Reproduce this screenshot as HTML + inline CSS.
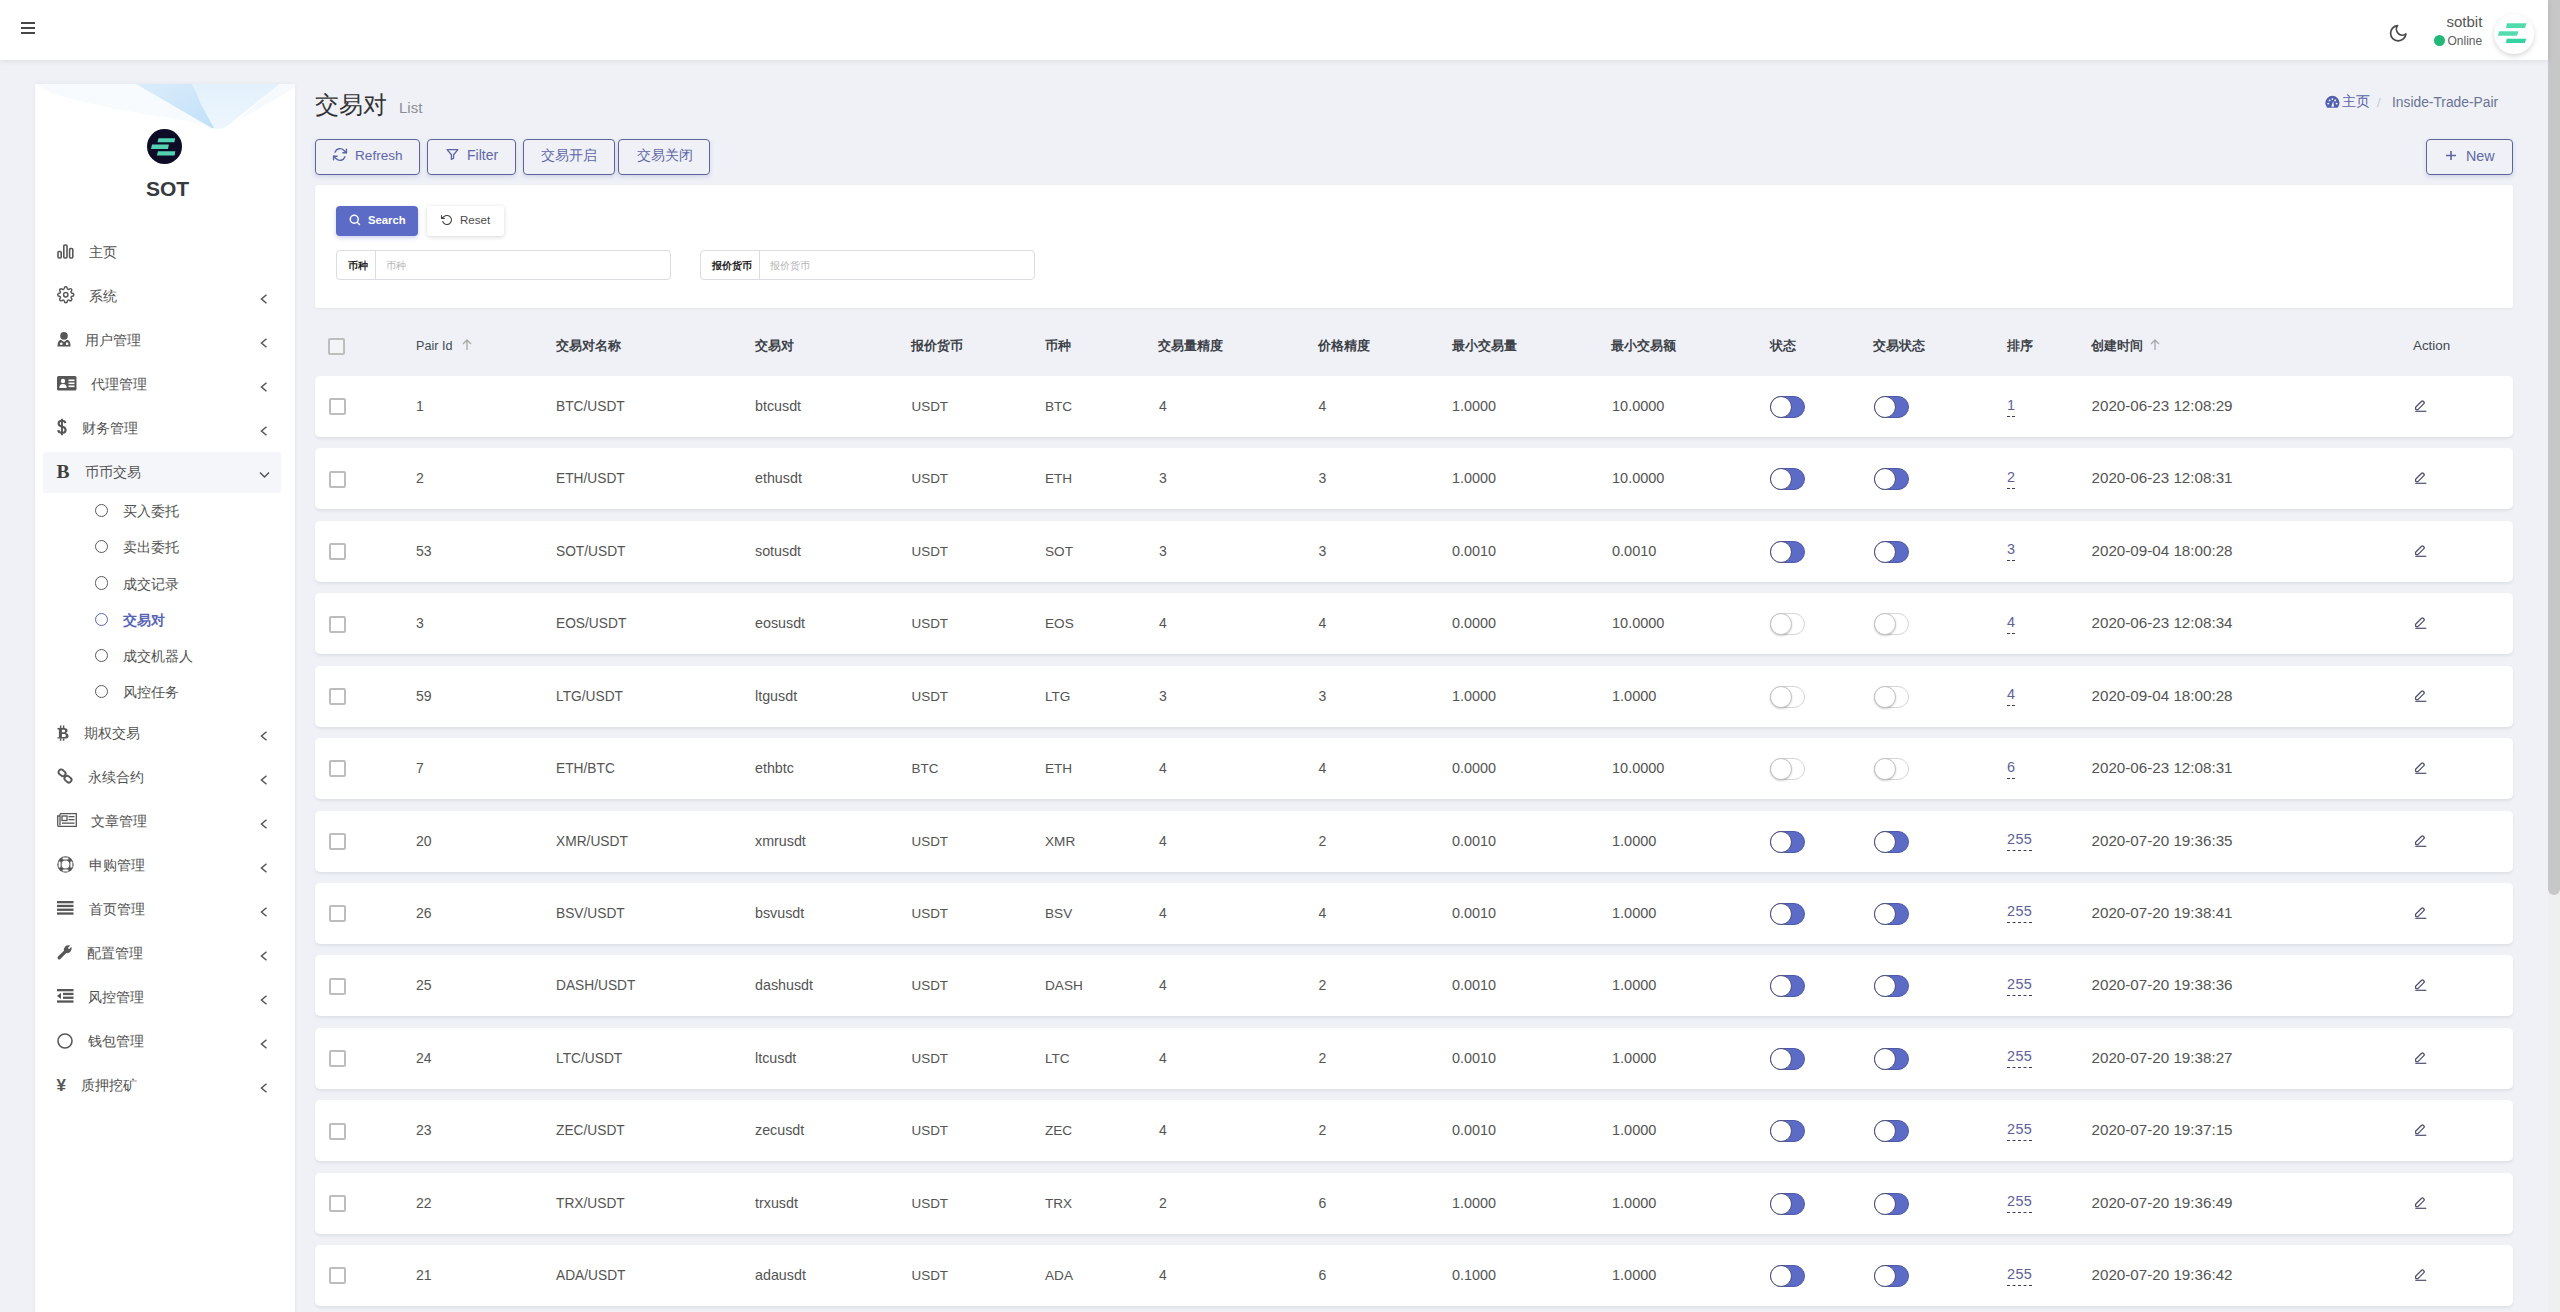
<!DOCTYPE html>
<html><head><meta charset="utf-8"><title>交易对</title>
<style>
*{box-sizing:border-box}
html,body{margin:0;padding:0}
body{width:2560px;height:1312px;overflow:hidden;position:relative;background:#eff1f7;
 font-family:"Liberation Sans",sans-serif;color:#4f4f4f}
.t{position:absolute;white-space:nowrap}
.a{position:absolute}
svg{position:absolute;overflow:visible}
.card{position:absolute;background:#fff;border-radius:5px;box-shadow:0 2px 3px rgba(20,20,30,.065)}
.btn{position:absolute;border:1px solid #5e6499;border-radius:4px;box-shadow:0 2px 4px rgba(70,80,160,.18)}
.cb{position:absolute;width:17px;height:17px;border:2px solid #bdbdbd;border-radius:2px;background:#fff}
.sw{position:absolute;width:35px;height:22px;border-radius:11px}
.sw.on{background:#5c6bc6;border:1px solid #4f5aa8}
.sw.off{background:#fff;border:1px solid #d6d6d6}
.sw i{position:absolute;left:-1px;top:-1px;width:22px;height:22px;border-radius:50%;background:#fff}
.sw.on i{border:1.5px solid #4b4f7a}
.sw.off i{border:1px solid #c4c4c4;box-shadow:0 1px 2px rgba(0,0,0,.2)}
.srt{position:absolute;border-bottom:1px dashed #3c3f63;color:#5d6199;font-size:14.4px;letter-spacing:0.4px;line-height:17px;height:20px;white-space:nowrap}
</style></head><body>

<div class="a" style="left:0;top:0;width:2548px;height:60px;background:#fff;box-shadow:0 1px 6px rgba(0,0,0,.09);z-index:2">
<div class="a" style="left:21px;top:22px;width:14px;height:2px;background:#474747"></div>
<div class="a" style="left:21px;top:27px;width:14px;height:2px;background:#474747"></div>
<div class="a" style="left:21px;top:32px;width:14px;height:2px;background:#474747"></div>
<svg style="left:2387.5px;top:22.5px" width="20.5" height="20.5" viewBox="0 0 24 24"><path d="M21 12.79A9 9 0 1 1 11.21 3 7 7 0 0 0 21 12.79z" fill="none" stroke="#4a4a4a" stroke-width="2" stroke-linejoin="round"/></svg>
<div class="t" style="left:2446.5px;top:10.54px;font-size:15px;line-height:21.0px;color:#555;font-weight:normal;">sotbit</div>
<div class="a" style="left:2434px;top:35px;width:11px;height:11px;border-radius:50%;background:#21b978"></div>
<div class="t" style="left:2447.5px;top:32.63px;font-size:12px;line-height:16.8px;color:#606060;font-weight:normal;">Online</div>
<div class="a" style="left:2494px;top:14px;width:40px;height:40px;border-radius:50%;background:#fff;box-shadow:0 2px 5px rgba(0,0,0,.16)"></div>
<svg style="left:2494px;top:13.5px" width="40" height="40" viewBox="0 0 40 40"><polygon points="13,9.2 32.5,9.2 31,14 12,14" fill="#4fdcaa"/><polygon points="5,17.2 24.5,17.2 23,21.8 4,21.8" fill="#55dcae"/><polygon points="12.8,24.7 32.3,24.7 30.8,28.9 11.8,28.9" fill="#33d3a3"/></svg>
</div>
<div class="a" style="left:2548px;top:0;width:12px;height:1312px;background:#eeefef"></div>
<div class="a" style="left:2548px;top:0;width:12px;height:895px;background:#c7c7c7;border-radius:0 0 6px 6px"></div>
<div class="a" style="left:35px;top:84px;width:260px;height:1240px;background:#fff;box-shadow:0 0 4px rgba(0,0,0,.05);overflow:hidden">
<svg style="left:0;top:0" width="260" height="60" viewBox="0 0 260 60"><defs><linearGradient id="g1" x1="0" y1="0" x2="1" y2="1"><stop offset="0" stop-color="#dcedfb"/><stop offset="1" stop-color="#c0e0f8"/></linearGradient><linearGradient id="g2" x1="0" y1="0" x2="0" y2="1"><stop offset="0" stop-color="#e2f1fc"/><stop offset="1" stop-color="#eef6fd"/></linearGradient></defs><path d="M0 0 H101 L178 43 Q150 36 110 30 Q60 22 18 10Z" fill="#f7fbfd"/><path d="M101 0 L157 0 Q162 8 166 20 L180 44 Q177 45 175 43 Z" fill="url(#g1)"/><path d="M157 0 L245 0 L192 42 Q185 47 179 44 L166 20 Q162 8 157 0Z" fill="url(#g2)"/><path d="M245 0 L260 0 L260 4 L200 38Z" fill="#f6fafd"/></svg>
</div>
<svg style="left:147px;top:129px" width="35" height="35" viewBox="0 0 35 35"><circle cx="17.5" cy="17.5" r="17.5" fill="#0d0b26"/><polygon points="11.5,9.2 28.2,9.2 27.4,13.2 10.5,13.2" fill="#52d2b0"/><polygon points="5,15.5 21.9,15.5 21,19.9 4,19.9" fill="#52d2b0"/><polygon points="10.9,22.2 28.4,22.2 27.6,26.5 9.9,26.5" fill="#52d2b0"/></svg>
<div class="t" style="left:146px;top:174.36px;font-size:21px;line-height:29.4px;color:#363a3f;font-weight:bold;">SOT</div>
<div class="a" style="left:43px;top:452px;width:238px;height:41px;background:#f5f6f9;border-radius:3px"></div>
<svg style="left:57px;top:243.5px" width="17" height="15" viewBox="0 0 17 15"><rect x="1" y="7.5" width="3.2" height="6.5" rx="1" fill="none" stroke="#575757" stroke-width="1.6"/><rect x="6.8" y="1" width="3.2" height="13" rx="1" fill="none" stroke="#575757" stroke-width="1.6"/><rect x="12.6" y="4.5" width="3.2" height="9.5" rx="1" fill="none" stroke="#575757" stroke-width="1.6"/></svg>
<div class="t" style="left:89px;top:242.57px;font-size:14px;line-height:19.6px;color:#525252;font-weight:normal;">主页</div>
<svg style="left:56.5px;top:286.3px" width="17.5" height="17.5" viewBox="0 0 24 24"><circle cx="12" cy="12" r="3" fill="none" stroke="#575757" stroke-width="2"/><path fill="none" stroke="#575757" stroke-width="2" d="M19.4 15a1.65 1.65 0 0 0 .33 1.82l.06.06a2 2 0 0 1 0 2.83 2 2 0 0 1-2.83 0l-.06-.06a1.65 1.65 0 0 0-1.82-.33 1.65 1.65 0 0 0-1 1.51V21a2 2 0 0 1-2 2 2 2 0 0 1-2-2v-.09A1.65 1.65 0 0 0 9 19.4a1.65 1.65 0 0 0-1.82.33l-.06.06a2 2 0 0 1-2.83 0 2 2 0 0 1 0-2.830l.06-.06a1.65 1.65 0 0 0 .33-1.82 1.65 1.65 0 0 0-1.51-1H3a2 2 0 0 1-2-2 2 2 0 0 1 2-2h.09A1.65 1.65 0 0 0 4.6 9a1.65 1.65 0 0 0-.33-1.82l-.06-.06a2 2 0 0 1 0-2.83 2 2 0 0 1 2.83 0l.06.06a1.65 1.65 0 0 0 1.820.33H9a1.65 1.65 0 0 0 1-1.51V3a2 2 0 0 1 2-2 2 2 0 0 1 2 2v.09a1.65 1.65 0 0 0 1 1.51 1.65 1.65 0 0 0 1.82-.33l.06-.06a2 2 0 0 1 2.83 0 2 2 0 0 1 0 2.83l-.06.06a1.65 1.65 0 0 0-.33 1.82V9a1.65 1.65 0 0 0 1.51 1H21a2 2 0 0 1 2 2 2 2 0 0 1-2 2h-.09a1.65 1.65 0 0 0-1.51 1z"/></svg>
<div class="t" style="left:89px;top:286.57px;font-size:14px;line-height:19.6px;color:#525252;font-weight:normal;">系统</div>
<svg style="left:260px;top:293.5px" width="8" height="10" viewBox="0 0 8 10"><path d="M6.5 .8 L1.5 5 L6.5 9.2" fill="none" stroke="#555" stroke-width="1.5"/></svg>
<svg style="left:57px;top:331.5px" width="14" height="15" viewBox="0 0 14 15"><circle cx="7" cy="3.9" r="3.8" fill="#575757"/><path d="M0.5 14.5 Q0.5 8 4 7.8 L7 10 L10 7.8 Q13.5 8 13.5 14.5Z" fill="#575757"/><circle cx="4.3" cy="11.8" r="1.3" fill="#fff"/><rect x="9" y="10.5" width="2.2" height="2.5" fill="#fff"/></svg>
<div class="t" style="left:85px;top:330.57px;font-size:14px;line-height:19.6px;color:#525252;font-weight:normal;">用户管理</div>
<svg style="left:260px;top:337.5px" width="8" height="10" viewBox="0 0 8 10"><path d="M6.5 .8 L1.5 5 L6.5 9.2" fill="none" stroke="#555" stroke-width="1.5"/></svg>
<svg style="left:57px;top:375.5px" width="20" height="15" viewBox="0 0 20 15"><rect x="0" y="0" width="19.5" height="14.5" rx="1.5" fill="#575757"/><circle cx="6" cy="5" r="2.2" fill="#fff"/><path d="M2.3 12 Q2.3 8 6 8 Q9.7 8 9.7 12Z" fill="#fff"/><rect x="11.5" y="3.5" width="6" height="1.6" fill="#fff"/><rect x="11.5" y="6.5" width="6" height="1.6" fill="#fff"/><rect x="11.5" y="9.5" width="6" height="1.6" fill="#fff"/></svg>
<div class="t" style="left:90.7px;top:374.57px;font-size:14px;line-height:19.6px;color:#525252;font-weight:normal;">代理管理</div>
<svg style="left:260px;top:381.5px" width="8" height="10" viewBox="0 0 8 10"><path d="M6.5 .8 L1.5 5 L6.5 9.2" fill="none" stroke="#555" stroke-width="1.5"/></svg>
<svg style="left:57px;top:417.5px" width="10" height="18" viewBox="0 0 10 18"><path d="M8.3 5.2 Q8 2.8 5 2.8 Q1.6 2.8 1.6 5.4 Q1.6 7.6 5 8.4 Q8.6 9.2 8.6 11.9 Q8.6 14.8 5 14.8 Q1.5 14.8 1.2 12.2" fill="none" stroke="#575757" stroke-width="2.1"/><path d="M5 .8V17.2" stroke="#575757" stroke-width="1.9"/></svg>
<div class="t" style="left:81.7px;top:418.57px;font-size:14px;line-height:19.6px;color:#525252;font-weight:normal;">财务管理</div>
<svg style="left:260px;top:425.5px" width="8" height="10" viewBox="0 0 8 10"><path d="M6.5 .8 L1.5 5 L6.5 9.2" fill="none" stroke="#555" stroke-width="1.5"/></svg>
<div class="t" style="left:56.5px;top:458.21px;font-size:19.5px;line-height:27.3px;color:#3f3f3f;font-weight:bold;font-family:'Liberation Serif',serif;">B</div>
<div class="t" style="left:85.4px;top:462.57px;font-size:14px;line-height:19.6px;color:#525252;font-weight:normal;">币币交易</div>
<svg style="left:259px;top:470.5px" width="11" height="8" viewBox="0 0 11 8"><path d="M1 1.5 L5.5 6 L10 1.5" fill="none" stroke="#555" stroke-width="1.5"/></svg>
<svg style="left:57px;top:725px" width="13" height="16" viewBox="0 0 13 16"><path d="M0.5 3H7Q10.6 3 10.6 5.8Q10.6 7.4 8.9 8Q11.6 8.6 11.6 11Q11.6 13.6 7.8 13.6H0.5V12.2H1.9V4.4H0.5Z M4.9 4.7V7.3H6.9Q8.1 7.3 8.1 6Q8.1 4.7 6.9 4.7Z M4.9 8.9V11.9H7.3Q8.9 11.9 8.9 10.4Q8.9 8.9 7.3 8.9Z" fill="#575757" fill-rule="evenodd"/><path d="M3.6 .4V3.2M6.6 .4V3.2M3.6 13.4V15.8M6.6 13.4V15.8" stroke="#575757" stroke-width="1.5"/></svg>
<div class="t" style="left:83.7px;top:724.07px;font-size:14px;line-height:19.6px;color:#525252;font-weight:normal;">期权交易</div>
<svg style="left:260px;top:731.0px" width="8" height="10" viewBox="0 0 8 10"><path d="M6.5 .8 L1.5 5 L6.5 9.2" fill="none" stroke="#555" stroke-width="1.5"/></svg>
<svg style="left:57px;top:767.5px" width="16" height="16" viewBox="0 0 16 16"><g fill="none" stroke="#575757" stroke-width="1.9"><rect x="1.3" y="2.2" width="7.4" height="5.2" rx="2.4" transform="rotate(40 5 4.8)"/><rect x="7.3" y="8.6" width="7.4" height="5.2" rx="2.4" transform="rotate(40 11 11.2)"/></g></svg>
<div class="t" style="left:87.8px;top:768.07px;font-size:14px;line-height:19.6px;color:#525252;font-weight:normal;">永续合约</div>
<svg style="left:260px;top:775.0px" width="8" height="10" viewBox="0 0 8 10"><path d="M6.5 .8 L1.5 5 L6.5 9.2" fill="none" stroke="#555" stroke-width="1.5"/></svg>
<svg style="left:57px;top:813px" width="20" height="14" viewBox="0 0 20 14"><g fill="none" stroke="#575757" stroke-width="1.3"><path d="M3 .7H19.3V13.3H1.5A1 1 0 0 1 .7 12.3V3H3"/><path d="M3 .7V12.5"/><rect x="5" y="3" width="5" height="4.5"/></g><rect x="11.5" y="3" width="6" height="1.3" fill="#575757"/><rect x="11.5" y="6" width="6" height="1.3" fill="#575757"/><rect x="5" y="9.5" width="12.5" height="1.3" fill="#575757"/></svg>
<div class="t" style="left:90.7px;top:812.07px;font-size:14px;line-height:19.6px;color:#525252;font-weight:normal;">文章管理</div>
<svg style="left:260px;top:819.0px" width="8" height="10" viewBox="0 0 8 10"><path d="M6.5 .8 L1.5 5 L6.5 9.2" fill="none" stroke="#555" stroke-width="1.5"/></svg>
<svg style="left:57px;top:856px" width="17" height="17" viewBox="0 0 17 17"><circle cx="8.5" cy="8.5" r="8.2" fill="#575757"/><circle cx="8.5" cy="8.5" r="3.9" fill="#fff"/><g fill="#fff"><rect x="5.6" y="1.6" width="5.8" height="2" rx=".5"/><rect x="5.6" y="13.4" width="5.8" height="2" rx=".5"/><rect x="1.6" y="5.6" width="2" height="5.8" rx=".5"/><rect x="13.4" y="5.6" width="2" height="5.8" rx=".5"/></g></svg>
<div class="t" style="left:89px;top:856.07px;font-size:14px;line-height:19.6px;color:#525252;font-weight:normal;">申购管理</div>
<svg style="left:260px;top:863.0px" width="8" height="10" viewBox="0 0 8 10"><path d="M6.5 .8 L1.5 5 L6.5 9.2" fill="none" stroke="#555" stroke-width="1.5"/></svg>
<svg style="left:57px;top:901px" width="17" height="14" viewBox="0 0 17 14"><g fill="#575757"><rect y="0" width="16.5" height="2.3"/><rect y="3.8" width="16.5" height="2.3"/><rect y="7.6" width="16.5" height="2.3"/><rect y="11.4" width="16.5" height="2.3"/></g></svg>
<div class="t" style="left:89px;top:900.07px;font-size:14px;line-height:19.6px;color:#525252;font-weight:normal;">首页管理</div>
<svg style="left:260px;top:907.0px" width="8" height="10" viewBox="0 0 8 10"><path d="M6.5 .8 L1.5 5 L6.5 9.2" fill="none" stroke="#555" stroke-width="1.5"/></svg>
<svg style="left:57px;top:944px" width="16" height="16" viewBox="0 0 16 16"><path d="M2.2 13.8 L8.6 7.4" stroke="#575757" stroke-width="3.4" stroke-linecap="round"/><path d="M7.2 7.6 A4.6 4.6 0 0 1 13.2 1.6 L10.8 4 L12 5.2 L14.4 2.8 A4.6 4.6 0 0 1 8.4 8.8Z" fill="#575757"/></svg>
<div class="t" style="left:87.3px;top:944.07px;font-size:14px;line-height:19.6px;color:#525252;font-weight:normal;">配置管理</div>
<svg style="left:260px;top:951.0px" width="8" height="10" viewBox="0 0 8 10"><path d="M6.5 .8 L1.5 5 L6.5 9.2" fill="none" stroke="#555" stroke-width="1.5"/></svg>
<svg style="left:57px;top:989px" width="17" height="14" viewBox="0 0 17 14"><g fill="#575757"><rect y="0" width="16.5" height="2.3"/><rect x="6" y="3.8" width="10.5" height="2.3"/><rect x="6" y="7.6" width="10.5" height="2.3"/><rect y="11.4" width="16.5" height="2.3"/><polygon points="0,6.9 4,3.8 4,10"/></g></svg>
<div class="t" style="left:88.3px;top:988.07px;font-size:14px;line-height:19.6px;color:#525252;font-weight:normal;">风控管理</div>
<svg style="left:260px;top:995.0px" width="8" height="10" viewBox="0 0 8 10"><path d="M6.5 .8 L1.5 5 L6.5 9.2" fill="none" stroke="#555" stroke-width="1.5"/></svg>
<svg style="left:57px;top:1033px" width="16" height="16" viewBox="0 0 16 16"><circle cx="8" cy="8" r="7" fill="none" stroke="#575757" stroke-width="1.6"/></svg>
<div class="t" style="left:88.3px;top:1032.07px;font-size:14px;line-height:19.6px;color:#525252;font-weight:normal;">钱包管理</div>
<svg style="left:260px;top:1039.0px" width="8" height="10" viewBox="0 0 8 10"><path d="M6.5 .8 L1.5 5 L6.5 9.2" fill="none" stroke="#555" stroke-width="1.5"/></svg>
<div class="t" style="left:56.5px;top:1073.98px;font-size:17px;line-height:23.8px;color:#575757;font-weight:bold;">&#165;</div>
<div class="t" style="left:81.2px;top:1076.07px;font-size:14px;line-height:19.6px;color:#525252;font-weight:normal;">质押挖矿</div>
<svg style="left:260px;top:1083.0px" width="8" height="10" viewBox="0 0 8 10"><path d="M6.5 .8 L1.5 5 L6.5 9.2" fill="none" stroke="#555" stroke-width="1.5"/></svg>
<div class="a" style="left:94.5px;top:503.7px;width:13.6px;height:13.6px;border-radius:50%;border:1.8px solid #5a5a5a"></div>
<div class="t" style="left:123px;top:502.07px;font-size:14px;line-height:19.6px;color:#525252;font-weight:normal;">买入委托</div>
<div class="a" style="left:94.5px;top:539.7px;width:13.6px;height:13.6px;border-radius:50%;border:1.8px solid #5a5a5a"></div>
<div class="t" style="left:123px;top:538.07px;font-size:14px;line-height:19.6px;color:#525252;font-weight:normal;">卖出委托</div>
<div class="a" style="left:94.5px;top:576.2px;width:13.6px;height:13.6px;border-radius:50%;border:1.8px solid #5a5a5a"></div>
<div class="t" style="left:123px;top:574.57px;font-size:14px;line-height:19.6px;color:#525252;font-weight:normal;">成交记录</div>
<div class="a" style="left:94.5px;top:612.6px;width:13.6px;height:13.6px;border-radius:50%;border:1.8px solid #5865b6"></div>
<div class="t" style="left:123px;top:610.97px;font-size:14px;line-height:19.6px;color:#5865b6;font-weight:bold;">交易对</div>
<div class="a" style="left:94.5px;top:648.6px;width:13.6px;height:13.6px;border-radius:50%;border:1.8px solid #5a5a5a"></div>
<div class="t" style="left:123px;top:646.97px;font-size:14px;line-height:19.6px;color:#525252;font-weight:normal;">成交机器人</div>
<div class="a" style="left:94.5px;top:684.7px;width:13.6px;height:13.6px;border-radius:50%;border:1.8px solid #5a5a5a"></div>
<div class="t" style="left:123px;top:683.07px;font-size:14px;line-height:19.6px;color:#525252;font-weight:normal;">风控任务</div>
<div class="t" style="left:315px;top:87.77px;font-size:24px;line-height:33.6px;color:#333;font-weight:normal;">交易对</div>
<div class="t" style="left:399px;top:96.54px;font-size:15px;line-height:21.0px;color:#8a8e96;font-weight:normal;">List</div>
<svg style="left:2325px;top:97px" width="15" height="11" viewBox="0 0 15 11"><path d="M2.2 10.8 A7.1 7.1 0 1 1 12.6 10.8Z" fill="#5161b0"/><g fill="#fff"><circle cx="3.2" cy="6.6" r="0.9"/><circle cx="4.6" cy="3.4" r="0.9"/><circle cx="7.4" cy="2.1" r="0.9"/><circle cx="11.6" cy="6.6" r="0.9"/><circle cx="10.2" cy="3.4" r="0.9"/><path d="M6.3 9.6 L8.3 4.3 L8.9 9.8Z"/></g></svg>
<div class="t" style="left:2342px;top:93.09px;font-size:13.5px;line-height:18.9px;color:#5864a8;font-weight:normal;">主页</div>
<div class="t" style="left:2377px;top:93.60px;font-size:13px;line-height:18.2px;color:#c6c9d2;font-weight:normal;">/</div>
<div class="t" style="left:2392px;top:92.78px;font-size:13.8px;line-height:19.32px;color:#6a7394;font-weight:normal;">Inside-Trade-Pair</div>
<div class="btn" style="left:315px;top:139px;width:105px;height:36px"></div>
<svg style="left:333px;top:148px" width="14" height="13" viewBox="0 0 24 22"><g fill="none" stroke="#5d64a6" stroke-width="2.4" stroke-linecap="round" stroke-linejoin="round"><polyline points="23 2 23 8 17 8"/><polyline points="1 20 1 14 7 14"/><path d="M3.5 7A9 9 0 0 1 18.4 3.6L23 8M1 14l4.6 4.4A9 9 0 0 0 20.5 15"/></g></svg>
<div class="t" style="left:355px;top:145.99px;font-size:13.6px;line-height:19.04px;color:#6067a6;font-weight:normal;">Refresh</div>
<div class="btn" style="left:427px;top:139px;width:89px;height:36px"></div>
<svg style="left:446px;top:148px" width="13" height="13" viewBox="0 0 24 24"><polygon points="22 3 2 3 10 12.5 10 21 14 19 14 12.5 22 3" fill="none" stroke="#5d64a6" stroke-width="2.4" stroke-linejoin="round"/></svg>
<div class="t" style="left:467px;top:145.57px;font-size:14px;line-height:19.6px;color:#6067a6;font-weight:normal;">Filter</div>
<div class="btn" style="left:523px;top:139px;width:92px;height:36px"></div>
<div class="t" style="left:541px;top:145.57px;font-size:14px;line-height:19.6px;color:#6067a6;font-weight:normal;">交易开启</div>
<div class="btn" style="left:618px;top:139px;width:92px;height:36px"></div>
<div class="t" style="left:637px;top:145.57px;font-size:14px;line-height:19.6px;color:#6067a6;font-weight:normal;">交易关闭</div>
<div class="btn" style="left:2426px;top:139px;width:87px;height:36px"></div>
<svg style="left:2446px;top:151px" width="10" height="9" viewBox="0 0 10 9"><path d="M5 0V9M0 4.5H10" stroke="#5d64a6" stroke-width="1.6"/></svg>
<div class="t" style="left:2466px;top:146.26px;font-size:14.3px;line-height:20.02px;color:#6067a6;font-weight:normal;">New</div>
<div class="card" style="left:315px;top:185px;width:2198px;height:123px;border-radius:3px;box-shadow:0 1px 3px rgba(0,0,0,.05)"></div>
<div class="a" style="left:336px;top:206px;width:82px;height:30px;background:#5c6bc6;border-radius:4px;box-shadow:0 2px 4px rgba(92,107,198,.3)"></div>
<svg style="left:349px;top:214px" width="12" height="12" viewBox="0 0 24 24"><g fill="none" stroke="#fff" stroke-width="3" stroke-linecap="round"><circle cx="10.5" cy="10.5" r="8"/><path d="M21 21l-4.6-4.6"/></g></svg>
<div class="t" style="left:368px;top:212.66px;font-size:11.3px;line-height:15.82px;color:#fff;font-weight:bold;">Search</div>
<div class="a" style="left:427px;top:206px;width:77px;height:30px;background:#fff;border-radius:3px;box-shadow:0 1px 4px rgba(0,0,0,.16)"></div>
<svg style="left:441px;top:214px" width="12" height="12" viewBox="0 0 24 24"><g fill="none" stroke="#444" stroke-width="2.2" stroke-linecap="round" stroke-linejoin="round"><polyline points="1 3 1 9 7 9"/><path d="M3.5 15a9 9 0 1 0 2.1-9.4L1 9"/></g></svg>
<div class="t" style="left:460px;top:212.35px;font-size:11.6px;line-height:16.24px;color:#4a4a4a;font-weight:normal;">Reset</div>
<div class="a" style="left:336px;top:250px;width:335px;height:30px;border:1px solid #dcdde3;border-radius:4px;background:#fff"></div>
<div class="a" style="left:375px;top:250px;width:1px;height:30px;background:#dcdde3"></div>
<div class="t" style="left:347.5px;top:258.69px;font-size:10px;line-height:14.0px;color:#222;font-weight:bold;">币种</div>
<div class="t" style="left:386px;top:258.69px;font-size:10px;line-height:14.0px;color:#b4b4b4;font-weight:normal;">币种</div>
<div class="a" style="left:700px;top:250px;width:335px;height:30px;border:1px solid #dcdde3;border-radius:4px;background:#fff"></div>
<div class="a" style="left:759px;top:250px;width:1px;height:30px;background:#dcdde3"></div>
<div class="t" style="left:711.5px;top:258.69px;font-size:10px;line-height:14.0px;color:#222;font-weight:bold;">报价货币</div>
<div class="t" style="left:770px;top:258.69px;font-size:10px;line-height:14.0px;color:#b4b4b4;font-weight:normal;">报价货币</div>
<div class="cb" style="left:328px;top:338px;background:#f2f4f8"></div>
<div class="t" style="left:416px;top:335px;line-height:20px;font-size:14px;color:#3d4148;font-weight:normal"><span style="display:inline-block;width:139.70px;font-size:12.6px;color:#444a52">Pair Id</span><span style="display:inline-block;width:199.00px;font-size:12.5px;font-weight:bold;color:#3d4148">交易对名称</span><span style="display:inline-block;width:156.00px;font-size:12.5px;font-weight:bold;color:#3d4148">交易对</span><span style="display:inline-block;width:134.00px;font-size:12.5px;font-weight:bold;color:#3d4148">报价货币</span><span style="display:inline-block;width:113.00px;font-size:12.5px;font-weight:bold;color:#3d4148">币种</span><span style="display:inline-block;width:160.00px;font-size:12.5px;font-weight:bold;color:#3d4148">交易量精度</span><span style="display:inline-block;width:134.00px;font-size:12.5px;font-weight:bold;color:#3d4148">价格精度</span><span style="display:inline-block;width:159.00px;font-size:12.5px;font-weight:bold;color:#3d4148">最小交易量</span><span style="display:inline-block;width:159.00px;font-size:12.5px;font-weight:bold;color:#3d4148">最小交易额</span><span style="display:inline-block;width:103.00px;font-size:12.5px;font-weight:bold;color:#3d4148">状态</span><span style="display:inline-block;width:134.00px;font-size:12.5px;font-weight:bold;color:#3d4148">交易状态</span><span style="display:inline-block;width:84.00px;font-size:12.5px;font-weight:bold;color:#3d4148">排序</span><span style="display:inline-block;width:322.30px;font-size:12.5px;font-weight:bold;color:#3d4148">创建时间</span><span style="font-size:13.4px;color:#444a52">Action</span></div>
<svg style="left:462px;top:339px" width="10" height="11" viewBox="0 0 10 11"><path d="M5 11V1M1 5L5 1L9 5" fill="none" stroke="#a8a8a8" stroke-width="1.3"/></svg>
<svg style="left:2150px;top:339px" width="10" height="11" viewBox="0 0 10 11"><path d="M5 11V1M1 5L5 1L9 5" fill="none" stroke="#a8a8a8" stroke-width="1.3"/></svg>
<div class="card" style="left:315px;top:376.00px;width:2198px;height:61px"></div>
<div class="cb" style="left:329px;top:398.30px"></div>
<div class="t" style="left:416px;top:396px;line-height:20px;font-size:14px;color:#545454;font-weight:normal"><span style="display:inline-block;width:140.00px;font-size:14px;">1</span><span style="display:inline-block;width:199.00px;font-size:13.75px;">BTC/USDT</span><span style="display:inline-block;width:156.50px;font-size:14.3px;">btcusdt</span><span style="display:inline-block;width:133.50px;font-size:13.45px;">USDT</span><span style="display:inline-block;width:114.00px;font-size:13.6px;">BTC</span><span style="display:inline-block;width:159.50px;font-size:14px;">4</span><span style="display:inline-block;width:133.50px;font-size:14px;">4</span><span style="display:inline-block;width:160.00px;font-size:14.4px;">1.0000</span><span style="font-size:14.5px;">10.0000</span></div>
<div class="sw on" style="left:1770px;top:396.00px"><i></i></div>
<div class="sw on" style="left:1873.5px;top:396.00px"><i></i></div>
<div class="srt" style="left:2007px;top:396.50px">1</div>
<div class="t" style="left:2091.5px;top:396px;line-height:20px;font-size:14px;color:#545454;font-weight:normal"><span style="font-size:15.2px;">2020-06-23 12:08:29</span></div>
<svg style="left:2414px;top:399.00px" width="13" height="13" viewBox="0 0 13 13"><path d="M1.6 10.1 L1.6 8.3 L7.6 2.3 Q8.4 1.5 9.2 2.3 L9.9 3 Q10.7 3.8 9.9 4.6 L3.9 10.6 L2.1 10.6Z" fill="none" stroke="#4d4f70" stroke-width="1.25" stroke-linejoin="round"/><path d="M1.3 12.3H12.3" stroke="#4d4f70" stroke-width="1.2"/></svg>
<div class="card" style="left:315px;top:448.42px;width:2198px;height:61px"></div>
<div class="cb" style="left:329px;top:470.72px"></div>
<div class="t" style="left:416px;top:468px;line-height:20px;font-size:14px;color:#545454;font-weight:normal"><span style="display:inline-block;width:140.00px;font-size:14px;">2</span><span style="display:inline-block;width:199.00px;font-size:13.75px;">ETH/USDT</span><span style="display:inline-block;width:156.50px;font-size:14.3px;">ethusdt</span><span style="display:inline-block;width:133.50px;font-size:13.45px;">USDT</span><span style="display:inline-block;width:114.00px;font-size:13.6px;">ETH</span><span style="display:inline-block;width:159.50px;font-size:14px;">3</span><span style="display:inline-block;width:133.50px;font-size:14px;">3</span><span style="display:inline-block;width:160.00px;font-size:14.4px;">1.0000</span><span style="font-size:14.5px;">10.0000</span></div>
<div class="sw on" style="left:1770px;top:468.42px"><i></i></div>
<div class="sw on" style="left:1873.5px;top:468.42px"><i></i></div>
<div class="srt" style="left:2007px;top:468.92px">2</div>
<div class="t" style="left:2091.5px;top:468px;line-height:20px;font-size:14px;color:#545454;font-weight:normal"><span style="font-size:15.2px;">2020-06-23 12:08:31</span></div>
<svg style="left:2414px;top:471.42px" width="13" height="13" viewBox="0 0 13 13"><path d="M1.6 10.1 L1.6 8.3 L7.6 2.3 Q8.4 1.5 9.2 2.3 L9.9 3 Q10.7 3.8 9.9 4.6 L3.9 10.6 L2.1 10.6Z" fill="none" stroke="#4d4f70" stroke-width="1.25" stroke-linejoin="round"/><path d="M1.3 12.3H12.3" stroke="#4d4f70" stroke-width="1.2"/></svg>
<div class="card" style="left:315px;top:520.84px;width:2198px;height:61px"></div>
<div class="cb" style="left:329px;top:543.14px"></div>
<div class="t" style="left:416px;top:541px;line-height:20px;font-size:14px;color:#545454;font-weight:normal"><span style="display:inline-block;width:140.00px;font-size:14px;">53</span><span style="display:inline-block;width:199.00px;font-size:13.75px;">SOT/USDT</span><span style="display:inline-block;width:156.50px;font-size:14.3px;">sotusdt</span><span style="display:inline-block;width:133.50px;font-size:13.45px;">USDT</span><span style="display:inline-block;width:114.00px;font-size:13.6px;">SOT</span><span style="display:inline-block;width:159.50px;font-size:14px;">3</span><span style="display:inline-block;width:133.50px;font-size:14px;">3</span><span style="display:inline-block;width:160.00px;font-size:14.4px;">0.0010</span><span style="font-size:14.5px;">0.0010</span></div>
<div class="sw on" style="left:1770px;top:540.84px"><i></i></div>
<div class="sw on" style="left:1873.5px;top:540.84px"><i></i></div>
<div class="srt" style="left:2007px;top:541.34px">3</div>
<div class="t" style="left:2091.5px;top:541px;line-height:20px;font-size:14px;color:#545454;font-weight:normal"><span style="font-size:15.2px;">2020-09-04 18:00:28</span></div>
<svg style="left:2414px;top:543.84px" width="13" height="13" viewBox="0 0 13 13"><path d="M1.6 10.1 L1.6 8.3 L7.6 2.3 Q8.4 1.5 9.2 2.3 L9.9 3 Q10.7 3.8 9.9 4.6 L3.9 10.6 L2.1 10.6Z" fill="none" stroke="#4d4f70" stroke-width="1.25" stroke-linejoin="round"/><path d="M1.3 12.3H12.3" stroke="#4d4f70" stroke-width="1.2"/></svg>
<div class="card" style="left:315px;top:593.26px;width:2198px;height:61px"></div>
<div class="cb" style="left:329px;top:615.56px"></div>
<div class="t" style="left:416px;top:613px;line-height:20px;font-size:14px;color:#545454;font-weight:normal"><span style="display:inline-block;width:140.00px;font-size:14px;">3</span><span style="display:inline-block;width:199.00px;font-size:13.75px;">EOS/USDT</span><span style="display:inline-block;width:156.50px;font-size:14.3px;">eosusdt</span><span style="display:inline-block;width:133.50px;font-size:13.45px;">USDT</span><span style="display:inline-block;width:114.00px;font-size:13.6px;">EOS</span><span style="display:inline-block;width:159.50px;font-size:14px;">4</span><span style="display:inline-block;width:133.50px;font-size:14px;">4</span><span style="display:inline-block;width:160.00px;font-size:14.4px;">0.0000</span><span style="font-size:14.5px;">10.0000</span></div>
<div class="sw off" style="left:1770px;top:613.26px"><i></i></div>
<div class="sw off" style="left:1873.5px;top:613.26px"><i></i></div>
<div class="srt" style="left:2007px;top:613.76px">4</div>
<div class="t" style="left:2091.5px;top:613px;line-height:20px;font-size:14px;color:#545454;font-weight:normal"><span style="font-size:15.2px;">2020-06-23 12:08:34</span></div>
<svg style="left:2414px;top:616.26px" width="13" height="13" viewBox="0 0 13 13"><path d="M1.6 10.1 L1.6 8.3 L7.6 2.3 Q8.4 1.5 9.2 2.3 L9.9 3 Q10.7 3.8 9.9 4.6 L3.9 10.6 L2.1 10.6Z" fill="none" stroke="#4d4f70" stroke-width="1.25" stroke-linejoin="round"/><path d="M1.3 12.3H12.3" stroke="#4d4f70" stroke-width="1.2"/></svg>
<div class="card" style="left:315px;top:665.68px;width:2198px;height:61px"></div>
<div class="cb" style="left:329px;top:687.98px"></div>
<div class="t" style="left:416px;top:686px;line-height:20px;font-size:14px;color:#545454;font-weight:normal"><span style="display:inline-block;width:140.00px;font-size:14px;">59</span><span style="display:inline-block;width:199.00px;font-size:13.75px;">LTG/USDT</span><span style="display:inline-block;width:156.50px;font-size:14.3px;">ltgusdt</span><span style="display:inline-block;width:133.50px;font-size:13.45px;">USDT</span><span style="display:inline-block;width:114.00px;font-size:13.6px;">LTG</span><span style="display:inline-block;width:159.50px;font-size:14px;">3</span><span style="display:inline-block;width:133.50px;font-size:14px;">3</span><span style="display:inline-block;width:160.00px;font-size:14.4px;">1.0000</span><span style="font-size:14.5px;">1.0000</span></div>
<div class="sw off" style="left:1770px;top:685.68px"><i></i></div>
<div class="sw off" style="left:1873.5px;top:685.68px"><i></i></div>
<div class="srt" style="left:2007px;top:686.18px">4</div>
<div class="t" style="left:2091.5px;top:686px;line-height:20px;font-size:14px;color:#545454;font-weight:normal"><span style="font-size:15.2px;">2020-09-04 18:00:28</span></div>
<svg style="left:2414px;top:688.68px" width="13" height="13" viewBox="0 0 13 13"><path d="M1.6 10.1 L1.6 8.3 L7.6 2.3 Q8.4 1.5 9.2 2.3 L9.9 3 Q10.7 3.8 9.9 4.6 L3.9 10.6 L2.1 10.6Z" fill="none" stroke="#4d4f70" stroke-width="1.25" stroke-linejoin="round"/><path d="M1.3 12.3H12.3" stroke="#4d4f70" stroke-width="1.2"/></svg>
<div class="card" style="left:315px;top:738.10px;width:2198px;height:61px"></div>
<div class="cb" style="left:329px;top:760.40px"></div>
<div class="t" style="left:416px;top:758px;line-height:20px;font-size:14px;color:#545454;font-weight:normal"><span style="display:inline-block;width:140.00px;font-size:14px;">7</span><span style="display:inline-block;width:199.00px;font-size:13.75px;">ETH/BTC</span><span style="display:inline-block;width:156.50px;font-size:14.3px;">ethbtc</span><span style="display:inline-block;width:133.50px;font-size:13.45px;">BTC</span><span style="display:inline-block;width:114.00px;font-size:13.6px;">ETH</span><span style="display:inline-block;width:159.50px;font-size:14px;">4</span><span style="display:inline-block;width:133.50px;font-size:14px;">4</span><span style="display:inline-block;width:160.00px;font-size:14.4px;">0.0000</span><span style="font-size:14.5px;">10.0000</span></div>
<div class="sw off" style="left:1770px;top:758.10px"><i></i></div>
<div class="sw off" style="left:1873.5px;top:758.10px"><i></i></div>
<div class="srt" style="left:2007px;top:758.60px">6</div>
<div class="t" style="left:2091.5px;top:758px;line-height:20px;font-size:14px;color:#545454;font-weight:normal"><span style="font-size:15.2px;">2020-06-23 12:08:31</span></div>
<svg style="left:2414px;top:761.10px" width="13" height="13" viewBox="0 0 13 13"><path d="M1.6 10.1 L1.6 8.3 L7.6 2.3 Q8.4 1.5 9.2 2.3 L9.9 3 Q10.7 3.8 9.9 4.6 L3.9 10.6 L2.1 10.6Z" fill="none" stroke="#4d4f70" stroke-width="1.25" stroke-linejoin="round"/><path d="M1.3 12.3H12.3" stroke="#4d4f70" stroke-width="1.2"/></svg>
<div class="card" style="left:315px;top:810.52px;width:2198px;height:61px"></div>
<div class="cb" style="left:329px;top:832.82px"></div>
<div class="t" style="left:416px;top:831px;line-height:20px;font-size:14px;color:#545454;font-weight:normal"><span style="display:inline-block;width:140.00px;font-size:14px;">20</span><span style="display:inline-block;width:199.00px;font-size:13.75px;">XMR/USDT</span><span style="display:inline-block;width:156.50px;font-size:14.3px;">xmrusdt</span><span style="display:inline-block;width:133.50px;font-size:13.45px;">USDT</span><span style="display:inline-block;width:114.00px;font-size:13.6px;">XMR</span><span style="display:inline-block;width:159.50px;font-size:14px;">4</span><span style="display:inline-block;width:133.50px;font-size:14px;">2</span><span style="display:inline-block;width:160.00px;font-size:14.4px;">0.0010</span><span style="font-size:14.5px;">1.0000</span></div>
<div class="sw on" style="left:1770px;top:830.52px"><i></i></div>
<div class="sw on" style="left:1873.5px;top:830.52px"><i></i></div>
<div class="srt" style="left:2007px;top:831.02px">255</div>
<div class="t" style="left:2091.5px;top:831px;line-height:20px;font-size:14px;color:#545454;font-weight:normal"><span style="font-size:15.2px;">2020-07-20 19:36:35</span></div>
<svg style="left:2414px;top:833.52px" width="13" height="13" viewBox="0 0 13 13"><path d="M1.6 10.1 L1.6 8.3 L7.6 2.3 Q8.4 1.5 9.2 2.3 L9.9 3 Q10.7 3.8 9.9 4.6 L3.9 10.6 L2.1 10.6Z" fill="none" stroke="#4d4f70" stroke-width="1.25" stroke-linejoin="round"/><path d="M1.3 12.3H12.3" stroke="#4d4f70" stroke-width="1.2"/></svg>
<div class="card" style="left:315px;top:882.94px;width:2198px;height:61px"></div>
<div class="cb" style="left:329px;top:905.24px"></div>
<div class="t" style="left:416px;top:903px;line-height:20px;font-size:14px;color:#545454;font-weight:normal"><span style="display:inline-block;width:140.00px;font-size:14px;">26</span><span style="display:inline-block;width:199.00px;font-size:13.75px;">BSV/USDT</span><span style="display:inline-block;width:156.50px;font-size:14.3px;">bsvusdt</span><span style="display:inline-block;width:133.50px;font-size:13.45px;">USDT</span><span style="display:inline-block;width:114.00px;font-size:13.6px;">BSV</span><span style="display:inline-block;width:159.50px;font-size:14px;">4</span><span style="display:inline-block;width:133.50px;font-size:14px;">4</span><span style="display:inline-block;width:160.00px;font-size:14.4px;">0.0010</span><span style="font-size:14.5px;">1.0000</span></div>
<div class="sw on" style="left:1770px;top:902.94px"><i></i></div>
<div class="sw on" style="left:1873.5px;top:902.94px"><i></i></div>
<div class="srt" style="left:2007px;top:903.44px">255</div>
<div class="t" style="left:2091.5px;top:903px;line-height:20px;font-size:14px;color:#545454;font-weight:normal"><span style="font-size:15.2px;">2020-07-20 19:38:41</span></div>
<svg style="left:2414px;top:905.94px" width="13" height="13" viewBox="0 0 13 13"><path d="M1.6 10.1 L1.6 8.3 L7.6 2.3 Q8.4 1.5 9.2 2.3 L9.9 3 Q10.7 3.8 9.9 4.6 L3.9 10.6 L2.1 10.6Z" fill="none" stroke="#4d4f70" stroke-width="1.25" stroke-linejoin="round"/><path d="M1.3 12.3H12.3" stroke="#4d4f70" stroke-width="1.2"/></svg>
<div class="card" style="left:315px;top:955.36px;width:2198px;height:61px"></div>
<div class="cb" style="left:329px;top:977.66px"></div>
<div class="t" style="left:416px;top:975px;line-height:20px;font-size:14px;color:#545454;font-weight:normal"><span style="display:inline-block;width:140.00px;font-size:14px;">25</span><span style="display:inline-block;width:199.00px;font-size:13.75px;">DASH/USDT</span><span style="display:inline-block;width:156.50px;font-size:14.3px;">dashusdt</span><span style="display:inline-block;width:133.50px;font-size:13.45px;">USDT</span><span style="display:inline-block;width:114.00px;font-size:13.6px;">DASH</span><span style="display:inline-block;width:159.50px;font-size:14px;">4</span><span style="display:inline-block;width:133.50px;font-size:14px;">2</span><span style="display:inline-block;width:160.00px;font-size:14.4px;">0.0010</span><span style="font-size:14.5px;">1.0000</span></div>
<div class="sw on" style="left:1770px;top:975.36px"><i></i></div>
<div class="sw on" style="left:1873.5px;top:975.36px"><i></i></div>
<div class="srt" style="left:2007px;top:975.86px">255</div>
<div class="t" style="left:2091.5px;top:975px;line-height:20px;font-size:14px;color:#545454;font-weight:normal"><span style="font-size:15.2px;">2020-07-20 19:38:36</span></div>
<svg style="left:2414px;top:978.36px" width="13" height="13" viewBox="0 0 13 13"><path d="M1.6 10.1 L1.6 8.3 L7.6 2.3 Q8.4 1.5 9.2 2.3 L9.9 3 Q10.7 3.8 9.9 4.6 L3.9 10.6 L2.1 10.6Z" fill="none" stroke="#4d4f70" stroke-width="1.25" stroke-linejoin="round"/><path d="M1.3 12.3H12.3" stroke="#4d4f70" stroke-width="1.2"/></svg>
<div class="card" style="left:315px;top:1027.78px;width:2198px;height:61px"></div>
<div class="cb" style="left:329px;top:1050.08px"></div>
<div class="t" style="left:416px;top:1048px;line-height:20px;font-size:14px;color:#545454;font-weight:normal"><span style="display:inline-block;width:140.00px;font-size:14px;">24</span><span style="display:inline-block;width:199.00px;font-size:13.75px;">LTC/USDT</span><span style="display:inline-block;width:156.50px;font-size:14.3px;">ltcusdt</span><span style="display:inline-block;width:133.50px;font-size:13.45px;">USDT</span><span style="display:inline-block;width:114.00px;font-size:13.6px;">LTC</span><span style="display:inline-block;width:159.50px;font-size:14px;">4</span><span style="display:inline-block;width:133.50px;font-size:14px;">2</span><span style="display:inline-block;width:160.00px;font-size:14.4px;">0.0010</span><span style="font-size:14.5px;">1.0000</span></div>
<div class="sw on" style="left:1770px;top:1047.78px"><i></i></div>
<div class="sw on" style="left:1873.5px;top:1047.78px"><i></i></div>
<div class="srt" style="left:2007px;top:1048.28px">255</div>
<div class="t" style="left:2091.5px;top:1048px;line-height:20px;font-size:14px;color:#545454;font-weight:normal"><span style="font-size:15.2px;">2020-07-20 19:38:27</span></div>
<svg style="left:2414px;top:1050.78px" width="13" height="13" viewBox="0 0 13 13"><path d="M1.6 10.1 L1.6 8.3 L7.6 2.3 Q8.4 1.5 9.2 2.3 L9.9 3 Q10.7 3.8 9.9 4.6 L3.9 10.6 L2.1 10.6Z" fill="none" stroke="#4d4f70" stroke-width="1.25" stroke-linejoin="round"/><path d="M1.3 12.3H12.3" stroke="#4d4f70" stroke-width="1.2"/></svg>
<div class="card" style="left:315px;top:1100.20px;width:2198px;height:61px"></div>
<div class="cb" style="left:329px;top:1122.50px"></div>
<div class="t" style="left:416px;top:1120px;line-height:20px;font-size:14px;color:#545454;font-weight:normal"><span style="display:inline-block;width:140.00px;font-size:14px;">23</span><span style="display:inline-block;width:199.00px;font-size:13.75px;">ZEC/USDT</span><span style="display:inline-block;width:156.50px;font-size:14.3px;">zecusdt</span><span style="display:inline-block;width:133.50px;font-size:13.45px;">USDT</span><span style="display:inline-block;width:114.00px;font-size:13.6px;">ZEC</span><span style="display:inline-block;width:159.50px;font-size:14px;">4</span><span style="display:inline-block;width:133.50px;font-size:14px;">2</span><span style="display:inline-block;width:160.00px;font-size:14.4px;">0.0010</span><span style="font-size:14.5px;">1.0000</span></div>
<div class="sw on" style="left:1770px;top:1120.20px"><i></i></div>
<div class="sw on" style="left:1873.5px;top:1120.20px"><i></i></div>
<div class="srt" style="left:2007px;top:1120.70px">255</div>
<div class="t" style="left:2091.5px;top:1120px;line-height:20px;font-size:14px;color:#545454;font-weight:normal"><span style="font-size:15.2px;">2020-07-20 19:37:15</span></div>
<svg style="left:2414px;top:1123.20px" width="13" height="13" viewBox="0 0 13 13"><path d="M1.6 10.1 L1.6 8.3 L7.6 2.3 Q8.4 1.5 9.2 2.3 L9.9 3 Q10.7 3.8 9.9 4.6 L3.9 10.6 L2.1 10.6Z" fill="none" stroke="#4d4f70" stroke-width="1.25" stroke-linejoin="round"/><path d="M1.3 12.3H12.3" stroke="#4d4f70" stroke-width="1.2"/></svg>
<div class="card" style="left:315px;top:1172.62px;width:2198px;height:61px"></div>
<div class="cb" style="left:329px;top:1194.92px"></div>
<div class="t" style="left:416px;top:1193px;line-height:20px;font-size:14px;color:#545454;font-weight:normal"><span style="display:inline-block;width:140.00px;font-size:14px;">22</span><span style="display:inline-block;width:199.00px;font-size:13.75px;">TRX/USDT</span><span style="display:inline-block;width:156.50px;font-size:14.3px;">trxusdt</span><span style="display:inline-block;width:133.50px;font-size:13.45px;">USDT</span><span style="display:inline-block;width:114.00px;font-size:13.6px;">TRX</span><span style="display:inline-block;width:159.50px;font-size:14px;">2</span><span style="display:inline-block;width:133.50px;font-size:14px;">6</span><span style="display:inline-block;width:160.00px;font-size:14.4px;">1.0000</span><span style="font-size:14.5px;">1.0000</span></div>
<div class="sw on" style="left:1770px;top:1192.62px"><i></i></div>
<div class="sw on" style="left:1873.5px;top:1192.62px"><i></i></div>
<div class="srt" style="left:2007px;top:1193.12px">255</div>
<div class="t" style="left:2091.5px;top:1193px;line-height:20px;font-size:14px;color:#545454;font-weight:normal"><span style="font-size:15.2px;">2020-07-20 19:36:49</span></div>
<svg style="left:2414px;top:1195.62px" width="13" height="13" viewBox="0 0 13 13"><path d="M1.6 10.1 L1.6 8.3 L7.6 2.3 Q8.4 1.5 9.2 2.3 L9.9 3 Q10.7 3.8 9.9 4.6 L3.9 10.6 L2.1 10.6Z" fill="none" stroke="#4d4f70" stroke-width="1.25" stroke-linejoin="round"/><path d="M1.3 12.3H12.3" stroke="#4d4f70" stroke-width="1.2"/></svg>
<div class="card" style="left:315px;top:1245.04px;width:2198px;height:61px"></div>
<div class="cb" style="left:329px;top:1267.34px"></div>
<div class="t" style="left:416px;top:1265px;line-height:20px;font-size:14px;color:#545454;font-weight:normal"><span style="display:inline-block;width:140.00px;font-size:14px;">21</span><span style="display:inline-block;width:199.00px;font-size:13.75px;">ADA/USDT</span><span style="display:inline-block;width:156.50px;font-size:14.3px;">adausdt</span><span style="display:inline-block;width:133.50px;font-size:13.45px;">USDT</span><span style="display:inline-block;width:114.00px;font-size:13.6px;">ADA</span><span style="display:inline-block;width:159.50px;font-size:14px;">4</span><span style="display:inline-block;width:133.50px;font-size:14px;">6</span><span style="display:inline-block;width:160.00px;font-size:14.4px;">0.1000</span><span style="font-size:14.5px;">1.0000</span></div>
<div class="sw on" style="left:1770px;top:1265.04px"><i></i></div>
<div class="sw on" style="left:1873.5px;top:1265.04px"><i></i></div>
<div class="srt" style="left:2007px;top:1265.54px">255</div>
<div class="t" style="left:2091.5px;top:1265px;line-height:20px;font-size:14px;color:#545454;font-weight:normal"><span style="font-size:15.2px;">2020-07-20 19:36:42</span></div>
<svg style="left:2414px;top:1268.04px" width="13" height="13" viewBox="0 0 13 13"><path d="M1.6 10.1 L1.6 8.3 L7.6 2.3 Q8.4 1.5 9.2 2.3 L9.9 3 Q10.7 3.8 9.9 4.6 L3.9 10.6 L2.1 10.6Z" fill="none" stroke="#4d4f70" stroke-width="1.25" stroke-linejoin="round"/><path d="M1.3 12.3H12.3" stroke="#4d4f70" stroke-width="1.2"/></svg>
</body></html>
